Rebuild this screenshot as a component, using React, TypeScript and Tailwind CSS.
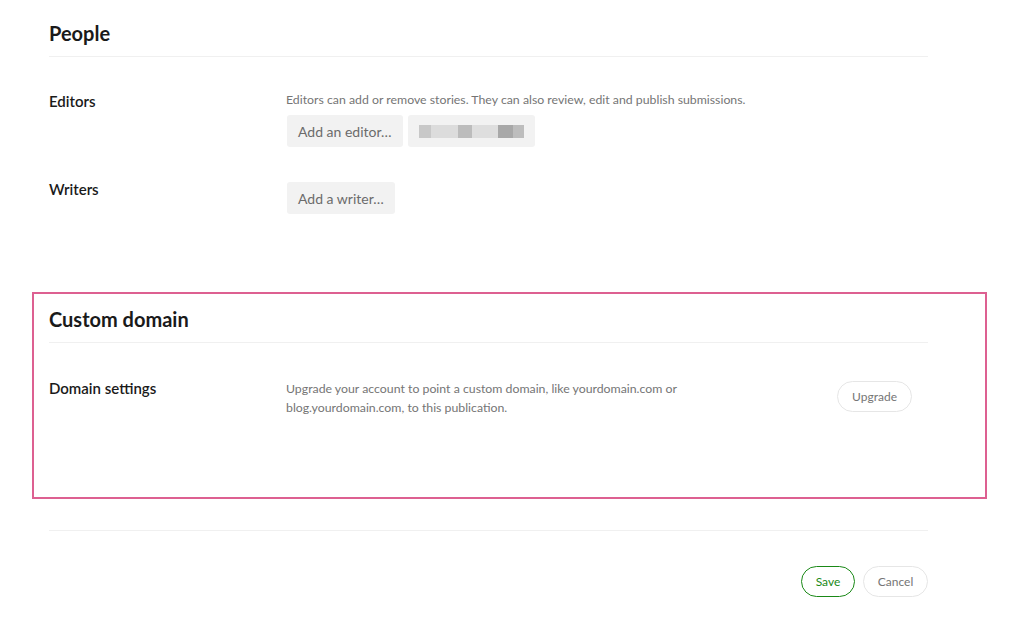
import React from "react";

const font = { fontFamily: "Lato, 'Noto Sans', sans-serif" };

function Row({
  label,
  children,
  className = "",
}: {
  label: string;
  children: React.ReactNode;
  className?: string;
}) {
  return (
    <div className={"flex " + className}>
      <div className="w-[237px] shrink-0 text-[15px] font-semibold leading-[20px] text-[#1a1a1a]">
        {label}
      </div>
      <div className="flex-1">{children}</div>
    </div>
  );
}

function GrayButton({ children }: { children: React.ReactNode }) {
  return (
    <div className="flex h-[32px] items-center rounded-[3px] bg-[#f2f2f2] px-[11px] text-[14px] text-[#6b6b6b]">
      {children}
    </div>
  );
}

// pixelated placeholder for the blurred editor name
const blurBlocks = [
  { w: 12, c: "bg-[#c8c8c8]" },
  { w: 27, c: "bg-[#dcdcdc]" },
  { w: 14, c: "bg-[#bcbcbc]" },
  { w: 26, c: "bg-[#dedede]" },
  { w: 15, c: "bg-[#a8a8a8]" },
  { w: 11, c: "bg-[#bdbdbd]" },
];

export default function App() {
  return (
    <div className="min-h-[631px] bg-white" style={font}>
      <div className="ml-[32px] w-[955px]">
        {/* People */}
        <section className="pl-[17px] pr-[59px]">
          <h2 className="mt-[19px] h-[28px] text-[20px] font-bold leading-[28px] text-[#1a1a1a]">
            People
          </h2>
          <div className="mt-[9px] h-px bg-[#f0f0f0]" />

          <Row label="Editors" className="mt-[34px]">
            <p className="text-[12.3px] leading-[18px] text-[#757575]">
              Editors can add or remove stories. They can also review, edit and
              publish submissions.
            </p>
            <div className="mt-[6px] flex gap-[5px] pl-px">
              <GrayButton>Add an editor…</GrayButton>
              <div className="flex h-[32px] w-[127px] items-center rounded-[3px] bg-[#f2f2f2] pl-[11px]">
                {blurBlocks.map((b, i) => (
                  <div key={i} className={"h-[13px] " + b.c} style={{ width: b.w }} />
                ))}
              </div>
            </div>
          </Row>

          <Row label="Writers" className="mt-[32px]">
            <div className="mt-[3px] flex pl-px">
              <GrayButton>Add a writer…</GrayButton>
            </div>
          </Row>
        </section>

        {/* Custom domain (highlighted) */}
        <section className="mt-[78px] border-2 border-[#dd6091] pb-[80px] pl-[15px] pr-[57px] pt-[11px]">
          <h2 className="h-[28px] text-[20px] font-bold leading-[28px] text-[#1a1a1a]">
            Custom domain
          </h2>
          <div className="mt-[9px] h-px bg-[#f0f0f0]" />

          <Row label="Domain settings" className="mt-[35px]">
            <div className="flex items-start">
              <p className="mt-px w-[420px] text-[12.3px] leading-[19px] text-[#757575]">
                Upgrade your account to point a custom domain, like
                yourdomain.com or blog.yourdomain.com, to this publication.
              </p>
              <button className="ml-auto mr-[16px] mt-[3px] h-[31px] rounded-full border border-[#e6e6e6] px-[14px] text-[12px] text-[#757575]">
                Upgrade
              </button>
            </div>
          </Row>
        </section>

        <div className="pl-[17px] pr-[59px]">
          <div className="mt-[31px] h-px bg-[#f0f0f0]" />
          <div className="mt-[35px] flex justify-end gap-[8px]">
            <button className="h-[31px] w-[54px] rounded-full border border-[#1a8917] text-[12px] text-[#1a8917]">
              Save
            </button>
            <button className="h-[31px] w-[65px] rounded-full border border-[#e6e6e6] text-[12px] text-[#757575]">
              Cancel
            </button>
          </div>
        </div>
      </div>
    </div>
  );
}
